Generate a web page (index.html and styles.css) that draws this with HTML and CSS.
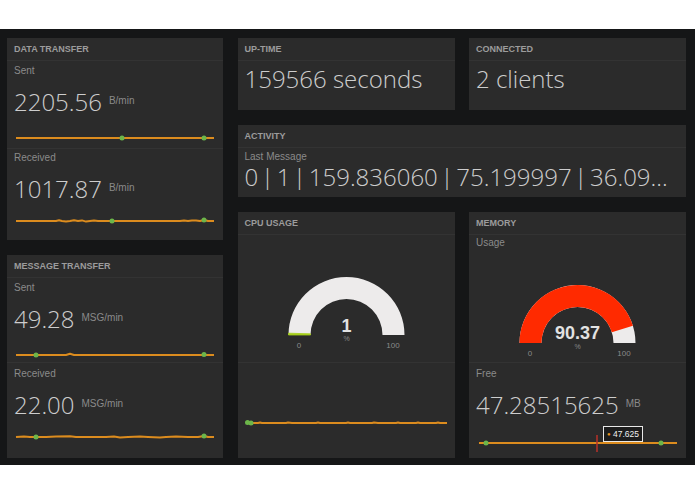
FILE: index.html
```html
<!DOCTYPE html>
<html>
<head>
    <title>Dashboard</title>
    <link rel="stylesheet" href="styles.css">
</head>
<body>
    <div class="board">
        <!-- Left column: transfer rates -->
        <div class="column">
            <div class="panel panel-data">
                <div class="panel-header">Data Transfer</div>
                <div class="widget">
                    <div class="label">Sent</div>
                    <div class="value">2205.56<span class="unit">B/min</span></div>
                    <svg class="sparkline" viewBox="0 0 198 20">
                        <polyline points="0,10 198,10"/>
                        <circle cx="106" cy="10" r="2.5"/>
                        <circle cx="188" cy="10" r="2.5"/>
                    </svg>
                </div>
                <div class="widget widget-rest widget-second">
                    <div class="label">Received</div>
                    <div class="value">1017.87<span class="unit">B/min</span></div>
                    <svg class="sparkline sparkline-near" viewBox="0 0 198 20">
                        <polyline points="0,10 40,10 43,9.3 46,10 50,10.6 54,10 58,9.3 62,10 66,9.4 70,10.6 74,10 78,9.4 82,10 164,10 168,9.4 172,10 176,9.4 180,9.4 184,10 188,9 192,10 198,10"/>
                        <circle cx="96" cy="10" r="2.5"/>
                        <circle cx="188" cy="9" r="2.5"/>
                    </svg>
                </div>
            </div>
            <div class="panel panel-fill">
                <div class="panel-header">Message Transfer</div>
                <div class="widget widget-msg">
                    <div class="label">Sent</div>
                    <div class="value">49.28<span class="unit">MSG/min</span></div>
                    <svg class="sparkline" viewBox="0 0 198 20">
                        <polyline points="0,10 50,10 54,8.8 58,10 188,10 198,10"/>
                        <circle cx="20" cy="10" r="2.5"/>
                        <circle cx="188" cy="9.5" r="2.5"/>
                    </svg>
                </div>
                <div class="widget widget-rest widget-lower">
                    <div class="label">Received</div>
                    <div class="value">22.00<span class="unit">MSG/min</span></div>
                    <svg class="sparkline sparkline-near" viewBox="0 0 198 20">
                        <polyline points="0,10 8,9.4 14,10 20,10 30,10 40,9.6 54,9.2 60,10 74,10 90,10 98,9.6 104,10.4 112,10 124,9.6 132,10 144,10.6 150,10 160,9.6 172,10 182,10 188,9 192,10 198,10"/>
                        <circle cx="20" cy="10" r="2.5"/>
                        <circle cx="188" cy="9" r="2.5"/>
                    </svg>
                </div>
            </div>
        </div>

        <div class="panel">
            <div class="panel-header">Up-time</div>
            <div class="widget widget-single">
                <div class="value">159566 seconds</div>
            </div>
        </div>

        <div class="panel">
            <div class="panel-header">Connected</div>
            <div class="widget widget-single">
                <div class="value">2 clients</div>
            </div>
        </div>

        <div class="panel panel-wide">
            <div class="panel-header">Activity</div>
            <div class="widget widget-activity">
                <div class="label">Last Message</div>
                <div class="value value-clip">0 | 1 | 159.836060 | 75.199997 | 36.099998 | 4.5</div>
            </div>
        </div>

        <div class="panel">
            <div class="panel-header">CPU Usage</div>
            <div class="gauge-box gauge-cpu">
                <svg class="gauge" viewBox="0 0 217 80">
                    <path class="gauge-track" d="M50.5 60 A58 58 0 0 1 166.5 60 L144.5 60 A36 36 0 0 0 72.5 60 Z"/>
                    <path class="gauge-cpu-fill" d="M50.5 60 A58 58 0 0 1 50.53 58.18 L72.52 58.87 A36 36 0 0 0 72.5 60 Z"/>
                    <text class="gauge-value" x="108.5" y="57">1</text>
                    <text class="gauge-unit" x="108.5" y="66">%</text>
                    <text class="gauge-tick" x="61" y="73">0</text>
                    <text class="gauge-tick" x="155" y="73">100</text>
                </svg>
            </div>
            <div class="widget widget-rest widget-cpu-spark">
                <svg class="sparkline sparkline-cpu" viewBox="0 0 201 20">
                    <polyline points="0,10 12,10 14,9.5 16,10 40,10 42,9.5 46,10 70,10 72,9.5 74,10 100,10 102,9.5 104,10 126,10 128,9.5 132,10 150,10 152,9.5 154,10 170,10 172,9.5 174,10 190,10 192,9.5 194,10 201,10"/>
                    <circle cx="1.5" cy="9.5" r="2.5"/>
                    <circle cx="5" cy="10" r="2.5"/>
                </svg>
            </div>
        </div>

        <div class="panel">
            <div class="panel-header">Memory</div>
            <div class="gauge-box gauge-mem">
                <div class="label">Usage</div>
                <svg class="gauge" viewBox="0 0 217 80">
                    <path class="gauge-track" d="M50.5 60 A58 58 0 0 1 166.5 60 L144.5 60 A36 36 0 0 0 72.5 60 Z"/>
                    <path class="gauge-mem-fill" d="M50.5 60 A58 58 0 0 1 163.87 42.72 L142.87 49.28 A36 36 0 0 0 72.5 60 Z"/>
                    <text class="gauge-value" x="108.5" y="56">90.37</text>
                    <text class="gauge-unit" x="108.5" y="66">%</text>
                    <text class="gauge-tick" x="61" y="73">0</text>
                    <text class="gauge-tick" x="155" y="73">100</text>
                </svg>
            </div>
            <div class="widget widget-rest widget-lower">
                <div class="label">Free</div>
                <div class="value">47.28515625<span class="unit">MB</span></div>
                <div class="spark-wrap">
                    <svg class="sparkline sparkline-far" viewBox="0 0 198 20">
                        <polyline points="0,10 198,10"/>
                        <line class="crosshair" x1="118" y1="2" x2="118" y2="19"/>
                        <circle cx="7" cy="10" r="2.5"/>
                        <circle cx="182" cy="10" r="2.5"/>
                    </svg>
                    <div class="spark-tip"><span class="tip-dot">&#9679;</span> 47.625</div>
                </div>
            </div>
        </div>
    </div>
</body>
</html>
```

FILE: styles.css
```css
body {
    margin: 0;
    background-color: #fff;
    font-family: "Liberation Sans", Arial, sans-serif;
}
/* Dark dashboard area */
.board {
    margin-top: 29px;
    height: 436px;
    box-sizing: border-box;
    padding: 9px 9px 7px 7px;
    background-color: #151617;
    display: grid;
    grid-template-columns: 216px 217px 217px;
    grid-template-rows: 72px 72px 1fr;
    column-gap: 14.5px;
    row-gap: 15px;
}
.column {
    grid-row: 1 / 4;
    display: flex;
    flex-direction: column;
    gap: 15px;
}
.panel {
    background-color: #2b2b2b;
    display: flex;
    flex-direction: column;
    overflow: hidden;
}
.panel-data {
    height: 202px;
}
.panel-fill {
    flex: 1;
}
.panel-wide {
    grid-column: 2 / 4;
}
.panel-header {
    height: 22px;
    line-height: 23px;
    padding: 0 7px;
    font-size: 9px;
    font-weight: bold;
    text-transform: uppercase;
    color: #9c9c9c;
    border-bottom: 1px solid #333;
    flex-shrink: 0;
}
/* Widget sections inside a panel */
.widget {
    padding: 3px 7px 0;
    border-bottom: 1px solid #333;
}
.widget-rest {
    flex: 1;
    border-bottom: none;
}
.widget-second {
    padding-top: 2px;
}
.widget-lower {
    padding-top: 4px;
}
.widget-msg {
    height: 85px;
    box-sizing: border-box;
}
.widget-single {
    padding-top: 5px;
    border-bottom: none;
}
.widget-activity {
    padding-top: 2px;
    border-bottom: none;
}
.label {
    font-size: 10px;
    line-height: 14px;
    color: #8a8a8a;
}
.value {
    font-family: "Open Sans", sans-serif;
    font-weight: 300;
    font-size: 24px;
    line-height: 26px;
    color: #cdcdcd;
    margin-top: 10px;
    white-space: nowrap;
}
.widget-single .value,
.widget-activity .value {
    margin-top: 0;
}
.value-clip {
    overflow: hidden;
    text-overflow: ellipsis;
    word-spacing: -3.5px;
}
.unit {
    font-family: "Liberation Sans", Arial, sans-serif;
    font-weight: normal;
    font-size: 10px;
    color: #8a8a8a;
    margin-left: 7px;
    vertical-align: 7px;
}
/* Sparklines */
.sparkline {
    display: block;
    width: 198px;
    height: 20px;
    margin: 13px 0 0 2px;
    overflow: visible;
}
.sparkline-near {
    margin-top: 9px;
}
.sparkline-far {
    margin-top: 15px;
    margin-left: 3px;
}
.sparkline polyline {
    fill: none;
    stroke: #dc8c1e;
    stroke-width: 2;
    stroke-linejoin: round;
}
.sparkline circle {
    fill: #6cb64a;
}
.sparkline .crosshair {
    stroke: #b8322a;
    stroke-width: 1.5;
}
.widget-cpu-spark {
    padding: 0 8px;
}
.sparkline-cpu {
    width: 201px;
    margin: 50px 0 0 0;
}
.spark-wrap {
    position: relative;
}
.spark-tip {
    position: absolute;
    left: 127px;
    top: -7px;
    width: 38px;
    height: 14px;
    line-height: 14px;
    border: 1px solid #e8e8e8;
    background-color: #1d1d1d;
    color: #f0f0f0;
    font-size: 8.5px;
    text-align: center;
}
.tip-dot {
    color: #e8921c;
    font-size: 6px;
    vertical-align: 1px;
}
/* Gauges */
.gauge-box {
    height: 128px;
    box-sizing: border-box;
    border-bottom: 1px solid #333;
    flex-shrink: 0;
}
.gauge-cpu {
    padding-top: 40px;
}
.gauge-mem {
    padding: 1px 7px 0;
}
.gauge-mem .gauge {
    margin: 33px -7px 0;
}
.gauge {
    display: block;
    width: 217px;
    height: 80px;
}
.gauge-track {
    fill: #edebeb;
}
.gauge-cpu-fill {
    fill: #a6cf1c;
    stroke: #a6cf1c;
    stroke-width: 0.8;
}
.gauge-mem-fill {
    fill: #ff2a00;
}
.gauge-value {
    font-family: "Liberation Sans", Arial, sans-serif;
    font-weight: bold;
    font-size: 18px;
    fill: #e2e2e2;
    text-anchor: middle;
}
.gauge-unit {
    font-size: 7px;
    fill: #8a8a8a;
    text-anchor: middle;
}
.gauge-tick {
    font-size: 8px;
    fill: #8a8a8a;
    text-anchor: middle;
}
```
